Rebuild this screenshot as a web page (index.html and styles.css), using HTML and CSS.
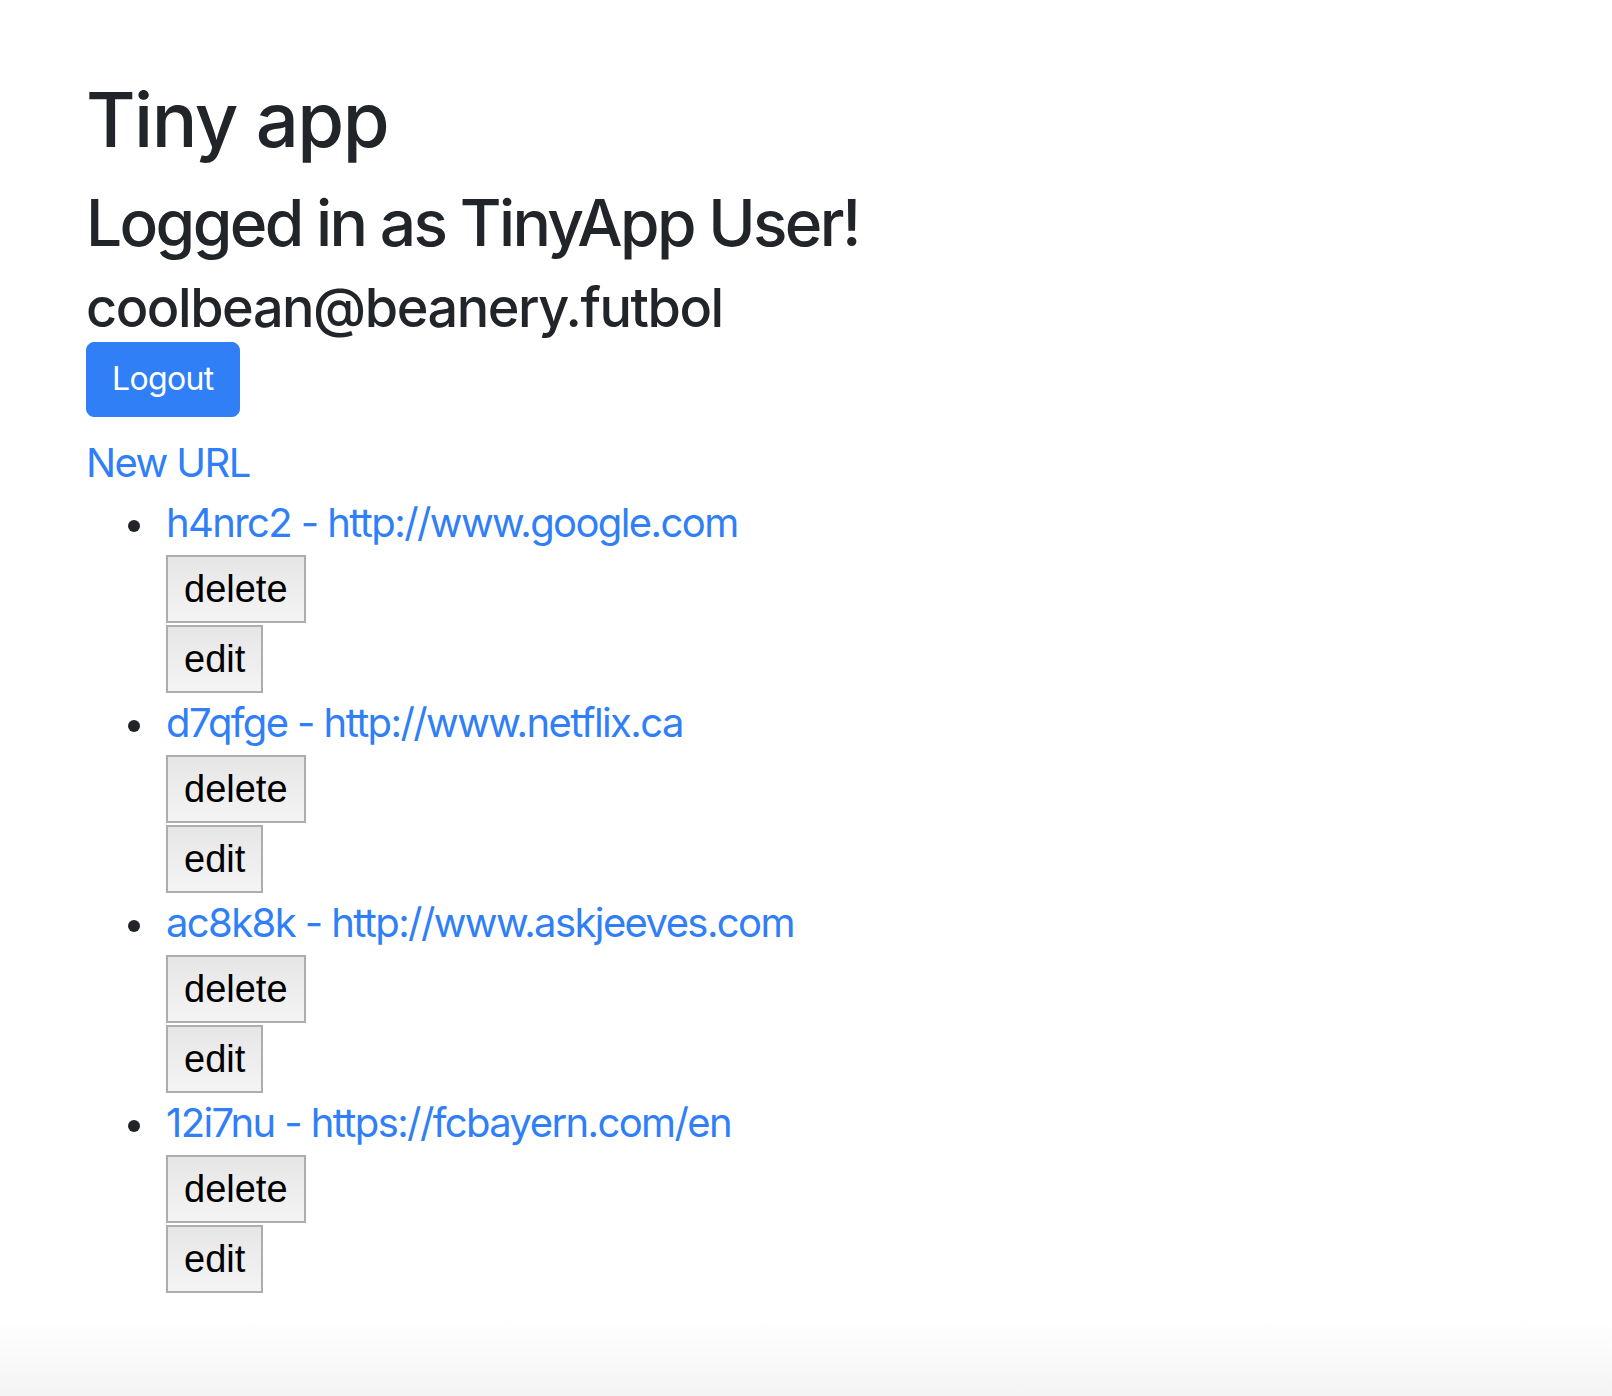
FILE: index.html
```html
<!DOCTYPE html>
<html lang="en">
<head>
<meta charset="utf-8">
<title>Tiny app</title>
<link rel="stylesheet" href="styles.css">
</head>
<body>
<main class="page">
  <h1 class="title">Tiny app</h1>
  <h2 class="greeting">Logged in as TinyApp User!</h2>
  <h3 class="email">coolbean@beanery.futbol</h3>
  <form class="logout-form"><button type="button" class="btn-primary">Logout</button></form>
  <a class="link new-link" href="#">New URL</a>
  <ul class="url-list">
    <li class="url-item">
      <a class="link" href="#">h4nrc2 - http://www.google.com</a>
      <form class="action-form"><button type="button" class="native-btn">delete</button></form>
      <form class="action-form"><button type="button" class="native-btn">edit</button></form>
    </li>
    <li class="url-item">
      <a class="link" href="#">d7qfge - http://www.netflix.ca</a>
      <form class="action-form"><button type="button" class="native-btn">delete</button></form>
      <form class="action-form"><button type="button" class="native-btn">edit</button></form>
    </li>
    <li class="url-item">
      <a class="link" href="#">ac8k8k - http://www.askjeeves.com</a>
      <form class="action-form"><button type="button" class="native-btn">delete</button></form>
      <form class="action-form"><button type="button" class="native-btn">edit</button></form>
    </li>
    <li class="url-item">
      <a class="link" href="#">12i7nu - https://fcbayern.com/en</a>
      <form class="action-form"><button type="button" class="native-btn">delete</button></form>
      <form class="action-form"><button type="button" class="native-btn">edit</button></form>
    </li>
  </ul>
</main>
</body>
</html>
```

FILE: styles.css
```css
html {
  min-height: 100%;
  background: linear-gradient(to bottom, #ffffff 0, #ffffff 1320px, #f4f4f4 1396px);
}
body {
  margin: 0;
  font-family: Inter, "Liberation Sans", sans-serif;
  color: #212529;
}
.page {
  padding: 74px 0 0 86px;
}
.title {
  margin: 0;
  font-size: 76px;
  font-weight: 500;
  line-height: 1.2;
  letter-spacing: -0.02em;
}
.greeting {
  margin: 20px 0 0;
  font-size: 64px;
  font-weight: 500;
  line-height: 1.2;
  letter-spacing: -0.041em;
}
.email {
  margin: 14px 0 0;
  font-size: 54px;
  font-weight: 500;
  line-height: 1.2;
  letter-spacing: -0.027em;
}
.logout-form {
  margin: 1px 0 0;
}
.btn-primary {
  display: inline-block;
  margin: 0;
  padding: 12.5px 25px;
  font-family: Inter, "Liberation Sans", sans-serif;
  font-size: 32px;
  line-height: 48px;
  letter-spacing: -0.02em;
  color: #fff;
  background: #307ff6;
  border: 1px solid #307ff6;
  border-radius: 8px;
}
.link {
  color: #307ff6;
  text-decoration: none;
  font-size: 40px;
  line-height: 60px;
  letter-spacing: -0.04em;
}
.new-link {
  display: inline-block;
  margin-top: 16px;
}
.url-list {
  margin: 0;
  padding-left: 80px;
  list-style: none;
  font-size: 40px;
  line-height: 60px;
}
.url-item {
  position: relative;
}
.url-item::before {
  content: "";
  position: absolute;
  left: -38px;
  top: 27px;
  width: 12px;
  height: 12px;
  border-radius: 50%;
  background: #212529;
}
.action-form {
  margin: 0;
  line-height: 0;
}
.native-btn {
  margin: 2px 0 0;
  padding: 10px 16px;
  height: 68px;
  font-family: "Liberation Sans", Arial, sans-serif;
  font-size: 38px;
  line-height: 44px;
  color: #000;
  background: linear-gradient(to bottom, #e6e6e6, #f4f4f4);
  border: 2px solid #adadad;
  border-radius: 0;
}
```
